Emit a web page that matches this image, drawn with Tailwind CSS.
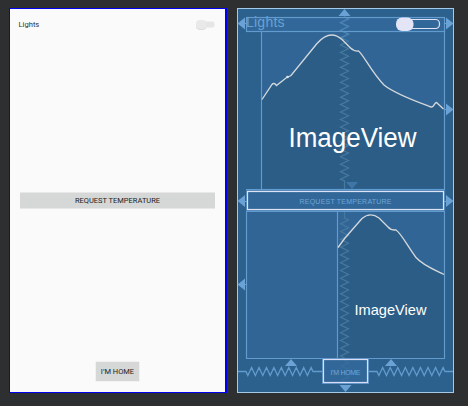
<!DOCTYPE html>
<html lang="en">
<head>
<meta charset="utf-8">
<title>Layout editor</title>
<script src="https://cdn.jsdelivr.net/npm/@tailwindcss/browser@4"></script>
</head>
<body class="w-[468px] h-[406px] overflow-hidden bg-[#2e2f31] font-['Roboto',sans-serif]">
<main class="flex gap-[10px] pl-[9px] pt-[8px]">
  <section class="flex flex-col w-[218px] h-[385px] shrink-0 bg-[#fafafa] border border-r-2 border-[#0000f0] pl-[8.500px] pr-[10px]">
    <div class="flex items-center justify-between h-[12px] mt-[10px]">
      <span class="text-[7.6px] leading-[12px] text-[#333]">Lights</span>
      <svg width="20" height="12" viewBox="0 0 20 12"><rect x="7" y="2.500" width="12.500" height="6" rx="2" fill="#e6e6e6"/><rect x="1" y="1.500" width="10.500" height="9.500" rx="4" fill="#dddddd"/><rect x="1" y="1" width="10.500" height="9" rx="4" fill="#e9e9e9"/></svg>
    </div>
    <div class="flex items-center justify-center w-[195px] h-[17px] ml-[1.500px] mt-[161px] bg-[#d6d8d7] border-y border-y-[#e7e8e7] text-[7.5px] leading-none text-[#222]"><span>REQUEST TEMPERATURE</span></div>
    <div class="flex items-center justify-center w-[43px] h-[19px] ml-[77.500px] mt-[153px] bg-[#d6d8d7] shadow-[0_0_0_0.5px_#e7e8e7] text-[7.5px] leading-none text-[#222]"><span>I’M HOME</span></div>
  </section>
  <svg class="shrink-0" width="217" height="385" viewBox="237 8 217 385" fill="none">
    <rect x="237.500" y="8.500" width="216" height="384" fill="#2d618d" stroke="#a5c9e6"/>
    <!-- widget areas -->
    <rect x="246.500" y="17.500" width="198" height="14" fill="#326899"/>
    <rect x="261.500" y="31.500" width="183" height="157" fill="#316595"/>
    <path d="M262 99.500L272 84.500Q274 82 276.500 85.500L286 78L291 75.500L317 43.500C325 34.500 333 31.500 342 39.500L350 47.500C353 50.500 355 51.500 358.500 51C363 54 372 73 384 85C395 94 415 101 431 107C434 107.500 434 103 436.500 102.500L443.500 109V188H262Z" fill="#2b5d86"/>
    <rect x="246.500" y="211.500" width="91" height="147" fill="#316595"/>
    <rect x="337.500" y="211.500" width="107" height="147" fill="#316595"/>
    <path d="M338 247.500L345 238L362 218.500C368 213.500 373 213.500 379 218L388 227C391 230.500 393 230 396 230C401 233 408 247 416 257.500C423 265.500 435 270 444 274.500V358H338Z" fill="#2b5d86"/>
    <!-- vertical springs -->
    <g stroke="#47799f" stroke-width="1.250">
      <path id="spring-top"/>
      <path id="spring-mid"/>
      <path id="spring-button" stroke="#4885b8"/>
    </g>
    <g stroke="#629bce" stroke-width="1.150">
      <rect x="246.500" y="17.500" width="198" height="14"/>
      <path d="M261.500 31V189M444.500 31V359M246.500 211V358.500H444.500M337.500 211V358M246 189.500H445M246 211.500H445"/>
      <path id="spring-left" stroke-width="1.300"/>
      <path id="spring-right" stroke-width="1.300"/>
    </g>
    <path d="M262 99.500L272 84.500Q274 82 276.500 85.500L286 78L291 75.500L317 43.500C325 34.500 333 31.500 342 39.500L350 47.500C353 50.500 355 51.500 358.500 51C363 54 372 73 384 85C395 94 415 101 431 107C434 107.500 434 103 436.500 102.500L443.500 109" stroke="#d3d8dc" stroke-width="1.350"/>
    <circle cx="287.500" cy="77" r="1.300" fill="#dde2e5"/>
    <path d="M338 247.500L345 238L362 218.500C368 213.500 373 213.500 379 218L388 227C391 230.500 393 230 396 230C401 233 408 247 416 257.500C423 265.500 435 270 444 274.500" stroke="#d3d8dc" stroke-width="1.350"/>
    <!-- buttons -->
    <rect x="247.500" y="191.500" width="196" height="18" fill="#326899"/>
    <rect x="246.500" y="190.500" width="198" height="20" stroke="#4b82b6"/>
    <rect x="247.500" y="191.500" width="196" height="18" stroke="#dce3f5" stroke-width="1.200"/>
    <rect x="323.500" y="359.500" width="44" height="23" fill="#326899"/>
    <path id="spring-home" stroke="#3a70a1"/>
    <rect x="322.500" y="358.500" width="46" height="25" stroke="#5a91c6"/>
    <rect x="323.500" y="359.500" width="44" height="23" stroke="#dcdcf5" stroke-width="1.200"/>
    <!-- switch -->
    <rect x="401.500" y="19.500" width="38" height="9" rx="4" stroke="#e0e3f5" stroke-width="1.200"/>
    <rect x="396" y="17.500" width="17.500" height="13.500" rx="6" fill="#e3e4f6"/>
    <!-- constraint arrows -->
    <g fill="#6aa2d6">
      <path d="M237.500 23.500L245 17.500V29.500ZM453.500 23.500L446 17.500V29.500ZM453.500 109.500L446 103.500V115.500ZM237.500 201L245 195V207ZM453.500 201L446 195V207ZM237.500 284.500L245 278.500V290.500Z"/>
      <path d="M344.500 9L338.500 16H350.500ZM291 359L285 366H297ZM391 359L385 366H397ZM345.500 392L339.500 385H351.500Z"/>
      <path d="M352 189L346 182H358Z" fill="#3f76a5"/>
    </g>
    <path d="M245 23.500H247M444 23.500H447M444 109.500H447M245 201.500H247M444 201.500H447M245 284.500H247" stroke="#6aa2d6"/>
    <text x="246" y="27" font-size="14" textLength="38.500" fill="#6aa1d4" font-family="'Liberation Sans',sans-serif">Lights</text>
    <text x="288.500" y="147" font-size="27" textLength="128" lengthAdjust="spacingAndGlyphs" fill="#fff" font-family="'Liberation Sans',sans-serif">ImageView</text>
    <text x="354.500" y="315" font-size="15" textLength="72" lengthAdjust="spacingAndGlyphs" fill="#fff" font-family="'Liberation Sans',sans-serif">ImageView</text>
    <text x="299.500" y="204" font-size="7" textLength="92" fill="#70a6d8" font-family="'Liberation Sans',sans-serif">REQUEST TEMPERATURE</text>
    <text x="330.500" y="375" font-size="7" textLength="30" fill="#70a6d8" font-family="'Liberation Sans',sans-serif">I’M HOME</text>
  </svg>
</main>
<script>
// Draws a spring between two points: straight lead-in, teeth, straight lead-out.
function spring(id, vertical, axis, from, start, end, to) {
  const at = (a, c) => vertical ? c + ' ' + a : a + ' ' + c;
  const teeth = Math.round((end - start) / 7.6), p = (end - start) / teeth;
  let d = 'M' + at(from, axis) + 'L' + at(start, axis);
  for (let i = 0; i < teeth; i++) {
    d += 'L' + at(start + (i + .25) * p, axis + 4) + 'L' + at(start + (i + .75) * p, axis - 4);
  }
  d += 'L' + at(end, axis) + 'L' + at(to, axis);
  document.getElementById(id).setAttribute('d', d);
}
spring('spring-top', true, 344.5, 16, 17, 181, 189);
spring('spring-mid', true, 344.5, 212, 218, 358, 358);
spring('spring-button', true, 344.5, 17, 17, 40, 40);
spring('spring-home', true, 345, 360, 361, 382, 382);
spring('spring-left', false, 371.5, 238, 246, 313, 323);
spring('spring-right', false, 371.5, 368, 377, 445, 453);
</script>
</body>
</html>
